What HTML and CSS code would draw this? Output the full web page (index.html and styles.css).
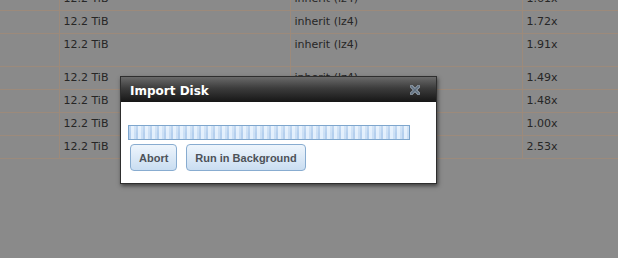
FILE: index.html
```html
<!DOCTYPE html>
<html>
<head>
<meta charset="utf-8">
<link rel="stylesheet" href="styles.css">
</head>
<body>
<table class="grid">
  <colgroup><col class="c1"><col class="c2"><col class="c3"><col class="c4"></colgroup>
  <tr><td></td><td>12.2 TiB</td><td>inherit (lz4)</td><td>1.61x</td></tr>
  <tr><td></td><td>12.2 TiB</td><td>inherit (lz4)</td><td>1.72x</td></tr>
  <tr class="tall"><td></td><td>12.2 TiB</td><td>inherit (lz4)</td><td>1.91x</td></tr>
  <tr><td></td><td>12.2 TiB</td><td>inherit (lz4)</td><td>1.49x</td></tr>
  <tr><td></td><td>12.2 TiB</td><td>inherit (lz4)</td><td>1.48x</td></tr>
  <tr><td></td><td>12.2 TiB</td><td>inherit (lz4)</td><td>1.00x</td></tr>
  <tr><td></td><td>12.2 TiB</td><td>inherit (lz4)</td><td>2.53x</td></tr>
</table>

<div class="dialog">
  <div class="titlebar">
    <span class="title">Import Disk</span>
    <svg class="close" width="10" height="10" viewBox="0 0 10 10">
      <path d="M1.5 1.5 L8.5 8.5 M8.5 1.5 L1.5 8.5" stroke="#9aa6b2" stroke-width="3.2" stroke-linecap="square"/>
      <path d="M1.5 1.5 L8.5 8.5 M8.5 1.5 L1.5 8.5" stroke="#5f6f80" stroke-width="1.6" stroke-linecap="square"/>
    </svg>
  </div>
  <div class="body">
    <div class="progress"></div>
    <div class="actions">
      <button class="btn">Abort</button>
      <button class="btn">Run in Background</button>
    </div>
  </div>
</div>
</body>
</html>
```
FILE: styles.css
```css
html, body {
  margin: 0;
  padding: 0;
  background: #8a8a8a;
  overflow: hidden;
  height: 100%;
}
body {
  font-family: "DejaVu Sans", Verdana, sans-serif;
  font-size: 11px;
  color: #262626;
}
.grid {
  border-collapse: collapse;
  table-layout: fixed;
  width: 660px;
  margin-top: -13px;
}
.grid .c1 { width: 59px; }
.grid .c2 { width: 231px; }
.grid .c3 { width: 232px; }
.grid .c4 { width: 138px; }
.grid td {
  border: 1px solid #9c8a7b;
  padding: 4px 4px 5px 4px;
  line-height: 13px;
  height: 13px;
  vertical-align: top;
  white-space: nowrap;
}
.grid td:first-child { border-left: none; }
.grid tr.tall td { height: 23px; }

.dialog {
  position: absolute;
  left: 120px;
  top: 76px;
  width: 315px;
  border: 1px solid #2e2e2e;
  background: #fff;
  box-shadow: 1px 2px 4px rgba(0,0,0,0.55);
}
.titlebar {
  height: 25px;
  display: flex;
  align-items: center;
  justify-content: space-between;
  padding: 0 16px 0 9px;
  background: linear-gradient(#6a6a6a 0%, #3c3c3c 45%, #161616 100%);
}
.title {
  font-family: "DejaVu Sans", Verdana, sans-serif;
  font-weight: bold;
  font-size: 12px;
  color: #fff;
  padding-top: 2px;
}
.close { display: block; margin-top: 1px; }
.body {
  padding: 23px 8px 12px 7px;
  display: flex;
  flex-direction: column;
  gap: 4px;
}
.progress {
  width: 280px;
  height: 13px;
  border: 1px solid #7ea6cd;
  background:
    linear-gradient(rgba(255,255,255,0.2), rgba(255,255,255,0) 60%),
    repeating-linear-gradient(90deg, #b4cfee 0 2px, #e3effc 2px 5px, #cbdff5 5px 7px);
}
.actions {
  display: flex;
  gap: 9px;
  padding-left: 2px;
}
.btn {
  height: 27px;
  padding: 0 8px;
  border: 1px solid #88acd0;
  border-radius: 4px;
  background: linear-gradient(#eef5fc, #c9ddf1);
  font-family: "Liberation Sans", Arial, sans-serif;
  font-weight: bold;
  font-size: 11px;
  color: #4d5258;
  cursor: pointer;
}
.btn.wide { padding: 0 7px; }
```
